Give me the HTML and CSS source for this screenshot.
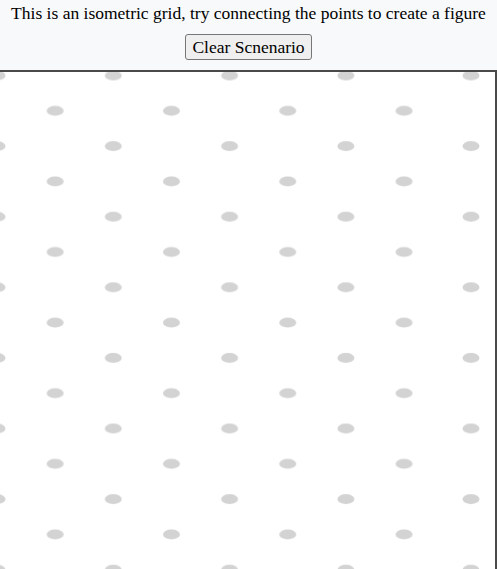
FILE: index.html
```html
<!DOCTYPE html>
<html lang="en">
<head>
  <meta charset="UTF-8">
  <meta name="viewport" content="width=device-width, initial-scale=1.0">
  <title>Isometric Grid</title>
  <link rel="stylesheet" href="styles.css">
</head>
<body>
  <div class="header">
    <p class="intro">This is an isometric grid, try connecting the points to create a figure</p>
    <button class="clear-btn">Clear Scnenario</button>
  </div>

  <div class="board">
    <svg class="grid" width="100%" height="100%">
      <defs>
        <pattern id="dots" patternUnits="userSpaceOnUse" x="-3" y="3.5" width="116.3" height="70.6">
          <ellipse cx="0" cy="0" rx="8.5" ry="5" fill="#d3d3d3"/>
          <ellipse cx="116.3" cy="0" rx="8.5" ry="5" fill="#d3d3d3"/>
          <ellipse cx="0" cy="70.6" rx="8.5" ry="5" fill="#d3d3d3"/>
          <ellipse cx="116.3" cy="70.6" rx="8.5" ry="5" fill="#d3d3d3"/>
          <ellipse cx="58.15" cy="35.3" rx="8.5" ry="5" fill="#d3d3d3"/>
        </pattern>
        <!-- last column sits a bit further right -->
        <pattern id="edge-dots" patternUnits="userSpaceOnUse" x="462" y="3.5" width="100" height="70.6">
          <ellipse cx="9" cy="0" rx="8.5" ry="5" fill="#d3d3d3"/>
          <ellipse cx="9" cy="70.6" rx="8.5" ry="5" fill="#d3d3d3"/>
        </pattern>
      </defs>
      <rect width="440" height="100%" fill="url(#dots)"/>
      <rect x="440" width="60" height="100%" fill="url(#edge-dots)"/>
    </svg>
  </div>
</body>
</html>
```

FILE: styles.css
```css
body {
  margin: 0;
  font-family: "Liberation Serif", serif;
  background: #f8f9fa;
  color: #000;
}

.header {
  display: flex;
  flex-direction: column;
  align-items: center;
  padding-top: 3px;
  gap: 11px;
}

.intro {
  margin: 0;
  font-size: 17.5px;
  line-height: 20px;
}

.clear-btn {
  font-family: "Liberation Serif", serif;
  font-size: 17.5px;
  line-height: 22px;
  padding: 1px 6px;
  background: #efefef;
  border: 1px solid #767676;
  border-radius: 3px;
  color: #000;
}

.board {
  margin-top: 10px;
  height: 600px;
  background: #fff;
  border-top: 2px solid #4a4a4a;
  border-right: 2px solid #4a4a4a;
}

.grid {
  display: block;
}
```
